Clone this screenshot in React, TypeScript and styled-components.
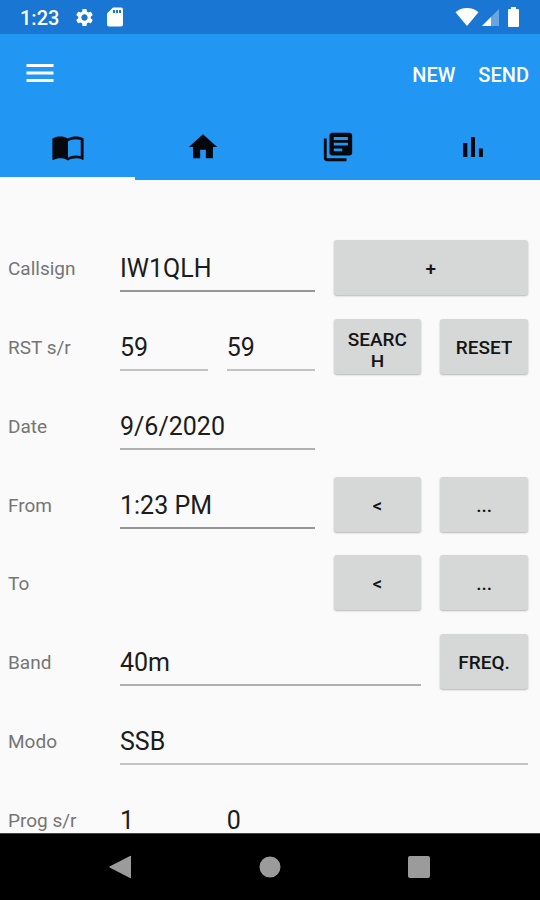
import React from "react";
import styled, { createGlobalStyle } from "styled-components";
import { MdMenu, MdImportContacts, MdLibraryBooks, MdSettings } from "react-icons/md";

const GlobalStyle = createGlobalStyle`
  *, *::before, *::after { box-sizing: border-box; }
  body {
    margin: 0;
    background: #fafafa;
    font-family: Roboto, "Noto Sans", sans-serif;
  }
  button, input { font-family: inherit; }
`;

const Screen = styled.div`
  display: flex;
  flex-direction: column;
  height: 100vh;
`;

const StatusBar = styled.div`
  display: flex;
  flex: none;
  align-items: center;
  justify-content: space-between;
  height: 34px;
  padding: 0 20px;
  background: #1976d2;
  color: #fff;
`;

const StatusGroup = styled.div<{ $gap: number }>`
  display: flex;
  align-items: center;
  gap: ${(p) => p.$gap}px;

  svg { display: block; }
`;

const Clock = styled.time`
  font-size: 20px;
  line-height: 24px;
  font-weight: 500;
  padding-top: 2px;
  margin-right: 3px;
`;

const Header = styled.header`
  flex: none;
  background: #2196f3;
`;

const Toolbar = styled.div`
  display: flex;
  align-items: center;
  height: 79px;
  padding: 0 11px 0 22px;
`;

const MenuButton = styled.button`
  display: flex;
  margin-right: auto;
  padding: 0 0 2px;
  border: 0;
  background: none;
  color: #fff;
`;

const ToolbarAction = styled.button`
  margin-left: 23px;
  padding: 2px 0 0;
  border: 0;
  background: none;
  color: #fff;
  font-size: 20px;
  line-height: 24px;
  font-weight: 500;
`;

const Tabs = styled.nav`
  display: grid;
  grid-template-columns: repeat(4, 1fr);
`;

const Tab = styled.button<{ $active?: boolean }>`
  display: flex;
  justify-content: center;
  align-items: flex-end;
  height: 67px;
  padding: 0 0 13px;
  border: 0;
  border-bottom: 3px solid ${(p) => (p.$active ? "#fff" : "transparent")};
  background: none;
  color: #05090d;
`;

const Content = styled.main`
  flex: 1;
  min-height: 0;
  overflow-y: auto;
  scrollbar-width: none;
  background: #fafafa;
`;

const Form = styled.form`
  display: grid;
  grid-auto-rows: 79px 79px 79px 78px;
  padding-top: 48px;
`;

const Row = styled.div`
  display: grid;
  grid-template-columns: 93px repeat(4, minmax(0, 1fr));
  column-gap: 19px;
  padding: 12px 12px 0 8px;
`;

const Label = styled.label`
  height: 58px;
  color: #757575;
  font-size: 19px;
  line-height: 58px;
  white-space: nowrap;
`;

const Field = styled.input<{ $span?: number; $line?: string }>`
  grid-column: span ${(p) => p.$span ?? 1};
  width: 100%;
  height: 52px;
  padding: 6px 0 0;
  border: 0;
  border-bottom: 2px solid ${(p) => p.$line ?? "#c3c3c3"};
  border-radius: 0;
  outline: none;
  background: transparent;
  color: #1c1c1c;
  font-size: 25px;
`;

const Button = styled.button<{ $span?: number }>`
  grid-column: span ${(p) => p.$span ?? 1};
  display: flex;
  align-items: center;
  justify-content: center;
  height: 55px;
  padding: 2px 12px 0;
  border: 0;
  border-radius: 3px;
  background: #d6d7d7;
  box-shadow: 0 1px 2px rgba(0, 0, 0, 0.28);
  color: #141414;
  font-size: 19px;
  font-weight: 500;
  text-align: center;
`;

const ButtonText = styled.span`
  max-height: 38px;
  overflow: hidden;
  line-height: 22px;
  overflow-wrap: anywhere;
`;

const NavBar = styled.nav`
  display: flex;
  flex: none;
  align-items: center;
  justify-content: center;
  gap: 125px;
  height: 67px;
  border-top: 1px solid #444;
  background: #000;
`;

const NavButton = styled.button`
  display: flex;
  padding: 0;
  border: 0;
  background: none;
  color: #9b9b9b;
`;

const Glyph = ({ size, d }: { size: number; d: string }) => (
  <svg width={size} height={size} viewBox="0 0 24 24" fill="currentColor" aria-hidden="true">
    <path d={d} />
  </svg>
);

const Action = ({ text, span, label }: { text: string; span?: number; label?: string }) => (
  <Button type="button" $span={span} aria-label={label}>
    <ButtonText>{text}</ButtonText>
  </Button>
);

const STRONG = "#969696";
const MEDIUM = "#b0b0b0";

export default function App() {
  return (
    <Screen>
      <GlobalStyle />
      <StatusBar>
        <StatusGroup $gap={12}>
          <Clock>1:23</Clock>
          <MdSettings size={21} />
          <svg width="16" height="20" viewBox="0 0 16 20" aria-hidden="true">
            <path fill="#fff" d="M6 0.5h8a2 2 0 0 1 2 2v15a2 2 0 0 1-2 2H2a2 2 0 0 1-2-2V6.5z" />
            <path fill="#1976d2" d="M6 3h2v3H6zM9 3h2v3H9zM12 3h2v3h-2z" />
          </svg>
        </StatusGroup>
        <StatusGroup $gap={3}>
          <svg width="24" height="20" viewBox="0 0 24 20" aria-hidden="true">
            <path fill="#fff" d="M12 19 0.5 5.2C3.500 2.500 7.500 1 12 1s8.500 1.500 11.500 4.200z" />
          </svg>
          <svg width="17" height="20" viewBox="0 0 17 20" aria-hidden="true">
            <path fill="#fff" fillOpacity=".35" d="M17 2v17H0z" />
            <path fill="#fff" d="M9 10v9H0z" />
          </svg>
          <svg width="18" height="22" viewBox="0 0 18 22" aria-hidden="true">
            <path fill="#fff" d="M9 1h5v2h2a1 1 0 0 1 1 1v16a1 1 0 0 1-1 1H7a1 1 0 0 1-1-1V4a1 1 0 0 1 1-1h2z" />
          </svg>
        </StatusGroup>
      </StatusBar>

      <Header>
        <Toolbar>
          <MenuButton type="button" aria-label="Menu">
            <MdMenu size={36} />
          </MenuButton>
          <ToolbarAction type="button">NEW</ToolbarAction>
          <ToolbarAction type="button">SEND</ToolbarAction>
        </Toolbar>
        <Tabs>
          <Tab type="button" $active aria-label="Log entry">
            <MdImportContacts size={34} />
          </Tab>
          <Tab type="button" aria-label="Home">
            <Glyph size={34} d="M10 20v-6h4v6h5v-8h3L12 3 2 12h3v8z" />
          </Tab>
          <Tab type="button" aria-label="Library">
            <MdLibraryBooks size={34} />
          </Tab>
          <Tab type="button" aria-label="Statistics">
            <Glyph size={34} d="M5 9.200h3V19H5zM10.600 5h2.800v14h-2.800zM16.200 13H19v6h-2.800z" />
          </Tab>
        </Tabs>
      </Header>

      <Content>
        <Form>
          <Row>
            <Label htmlFor="callsign">Callsign</Label>
            <Field id="callsign" $span={2} $line={STRONG} defaultValue="IW1QLH" />
            <Action text="+" span={2} label="Add" />
          </Row>
          <Row>
            <Label htmlFor="rst">RST s/r</Label>
            <Field id="rst" defaultValue="59" />
            <Field aria-label="RST received" defaultValue="59" />
            <Action text="SEARCH" />
            <Action text="RESET" />
          </Row>
          <Row>
            <Label htmlFor="date">Date</Label>
            <Field id="date" $span={2} $line={MEDIUM} defaultValue="9/6/2020" />
          </Row>
          <Row>
            <Label htmlFor="from">From</Label>
            <Field id="from" $span={2} $line={STRONG} defaultValue="1:23 PM" />
            <Action text="<" />
            <Action text="..." />
          </Row>
          <Row>
            <Label htmlFor="to">To</Label>
            <Field id="to" $span={2} $line="transparent" />
            <Action text="<" />
            <Action text="..." />
          </Row>
          <Row>
            <Label htmlFor="band">Band</Label>
            <Field id="band" $span={3} $line={MEDIUM} defaultValue="40m" />
            <Action text="FREQ." />
          </Row>
          <Row>
            <Label htmlFor="modo">Modo</Label>
            <Field id="modo" $span={4} defaultValue="SSB" />
          </Row>
          <Row>
            <Label htmlFor="prog">Prog s/r</Label>
            <Field id="prog" defaultValue="1" />
            <Field aria-label="Prog received" defaultValue="0" />
          </Row>
        </Form>
      </Content>

      <NavBar>
        <NavButton type="button" aria-label="Back">
          <Glyph size={24} d="M22 1v22a1 1 0 0 1-1 0L1.500 13a1 1 0 0 1 0-2L21 1a1 1 0 0 1 1 0z" />
        </NavButton>
        <NavButton type="button" aria-label="Home screen">
          <Glyph size={24} d="M12 1.500a10.500 10.500 0 1 1 0 21 10.500 10.500 0 0 1 0-21z" />
        </NavButton>
        <NavButton type="button" aria-label="Recent apps">
          <Glyph size={24} d="M3 1h18a2 2 0 0 1 2 2v18a2 2 0 0 1-2 2H3a2 2 0 0 1-2-2V3a2 2 0 0 1 2-2z" />
        </NavButton>
      </NavBar>
    </Screen>
  );
}
